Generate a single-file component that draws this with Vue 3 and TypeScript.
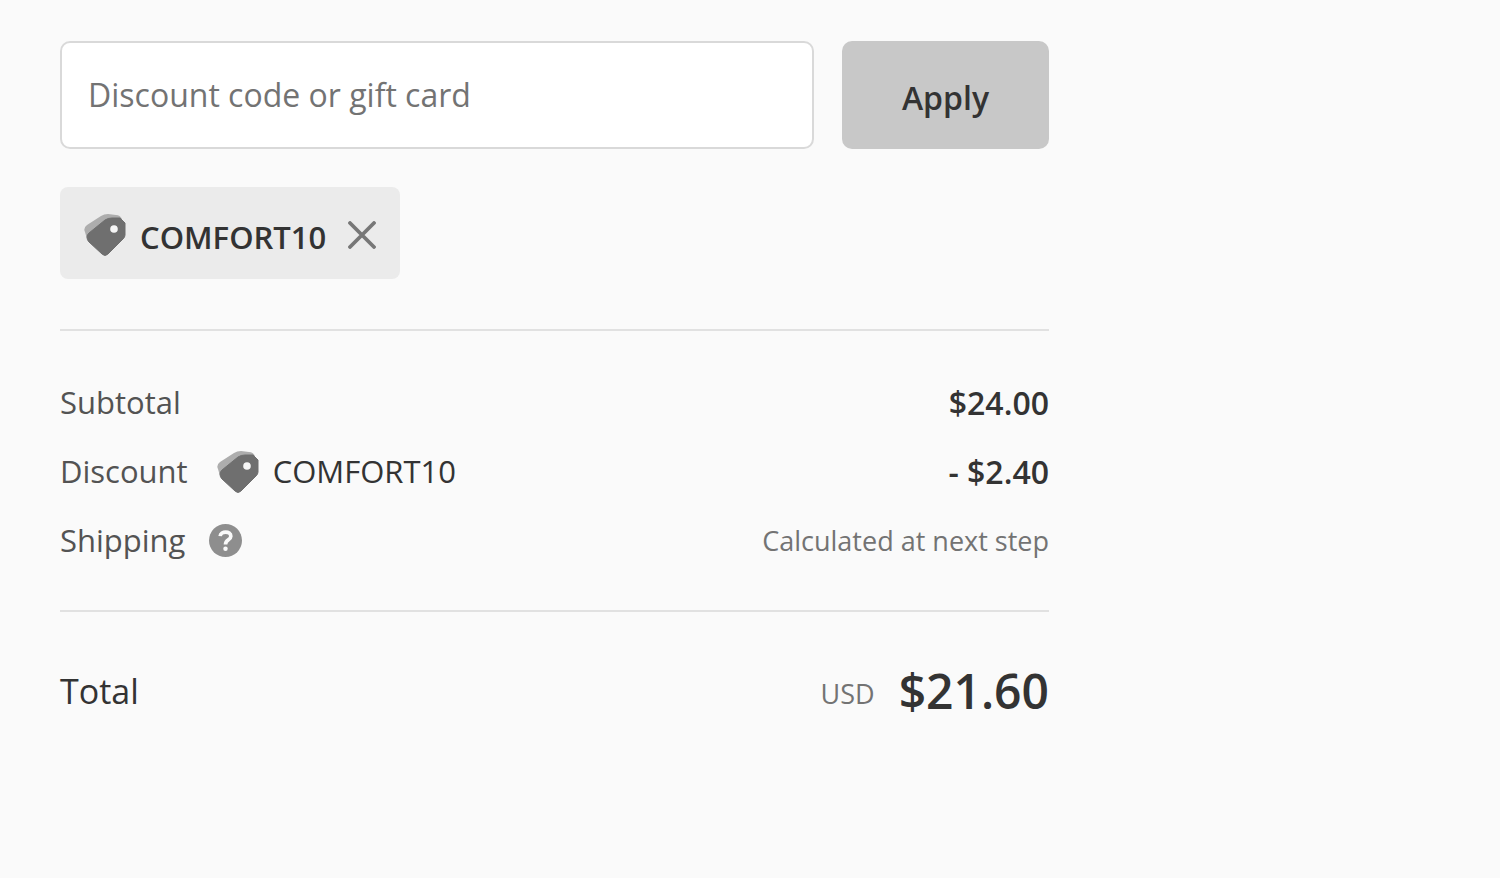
<script setup lang="ts">
import { ref } from 'vue'

const code = ref('')
const applied = ref<string[]>(['COMFORT10'])

function apply() {
  const value = code.value.trim()
  if (value && !applied.value.includes(value)) applied.value.push(value)
  code.value = ''
}

function remove(name: string) {
  applied.value = applied.value.filter((item) => item !== name)
}
</script>

<template>
  <main class="summary">
    <svg class="sprite" aria-hidden="true">
      <symbol id="tag" viewBox="0 0 42 44">
        <path
          d="M1 19 Q-1 15 3 12 L17 3 Q20 1 24 1 L32 2 Q36 2 38 6 L38 14 L3 26 Z"
          fill="#adadad"
        />
        <path
          d="M28 5 L36 5 L41 10 L41 22 Q41 24 39 26 L24 41 Q21 44 18 41 L5 29 Q3 27 3 24 Q3 22 5 20 L21 7 Q24 5 28 5 Z"
          fill="#6f6f6f"
          stroke="#6f6f6f"
          stroke-linejoin="round"
        />
        <circle cx="30" cy="16" r="3.8" fill="#f6f6f6" />
      </symbol>
    </svg>

    <form class="redeem" @submit.prevent="apply">
      <input v-model="code" type="text" class="field" aria-label="Discount code or gift card" placeholder="Discount code or gift card" />
      <button type="submit" class="apply">Apply</button>
    </form>

    <ul class="chips">
      <li v-for="name in applied" :key="name" class="chip">
        <svg class="tag" aria-hidden="true"><use href="#tag" /></svg>
        <span class="chip-name">{{ name }}</span>
        <button type="button" class="remove" :aria-label="`Remove ${name}`" @click="remove(name)">
          <svg class="cross" viewBox="0 0 28 28" aria-hidden="true">
            <path d="M2 2 L26 26 M26 2 L2 26" fill="none" stroke="#777" stroke-width="3.8" stroke-linecap="round" />
          </svg>
        </button>
      </li>
    </ul>

    <dl class="lines">
      <div class="line">
        <dt>Subtotal</dt>
        <dd class="amount">$24.00</dd>
      </div>
      <div class="line">
        <dt>
          Discount
          <span class="code"><svg class="tag" aria-hidden="true"><use href="#tag" /></svg>COMFORT10</span>
        </dt>
        <dd class="amount">- $2.40</dd>
      </div>
      <div class="line">
        <dt>
          Shipping
          <button type="button" class="help" aria-label="Shipping help">
            <svg viewBox="0 0 34 34" aria-hidden="true">
              <circle cx="17" cy="17" r="17" fill="#8e8e8e" />
              <path d="M11.5 12.5 C12 7 22.5 7 22.5 12.5 C22.5 16.5 17 16 17 21" fill="none" stroke="#fafafa" stroke-width="3.8" />
              <circle cx="17" cy="25.5" r="2.3" fill="#fafafa" />
            </svg>
          </button>
        </dt>
        <dd class="note">Calculated at next step</dd>
      </div>
    </dl>

    <dl class="total">
      <dt>Total</dt>
      <dd>
        <span class="currency">USD</span>
        <span class="price">$21.60</span>
      </dd>
    </dl>
  </main>
</template>

<style>
body {
  margin: 0;
  background: #fafafa;
}
</style>

<style scoped>
.summary {
  box-sizing: border-box;
  max-width: 1109px;
  padding: 41px 60px;
  color: #333;
  font-family: 'Segoe UI', 'Open Sans', 'Noto Sans', sans-serif;
  font-size: 31px;
}

.sprite {
  display: none;
}

.redeem {
  display: flex;
  gap: 28px;
  font-size: 32px;
}

.field {
  box-sizing: border-box;
  flex: 1;
  min-width: 0;
  padding: 28px 26px;
  border: 2px solid #d9d9d9;
  border-radius: 10px;
  background: #fff;
  color: #333;
  font: inherit;
  line-height: 48px;
}

.field::placeholder {
  color: #737373;
  opacity: 1;
}

.apply {
  padding: 4px 60px 0;
  border: 0;
  border-radius: 10px;
  background: #c8c8c8;
  color: #333;
  font: inherit;
  font-weight: 600;
}

.chips {
  display: flex;
  flex-wrap: wrap;
  gap: 20px;
  margin: 38px 0 50px;
  padding: 0;
  list-style: none;
}

.chip {
  display: flex;
  align-items: center;
  padding: 22px 24px 18px;
  border-radius: 8px;
  background: #ebebeb;
  line-height: 48px;
}

.tag {
  flex: none;
  width: 42px;
  height: 44px;
  margin-right: 14px;
}

.chip-name {
  padding-top: 4px;
  font-weight: 600;
}

.remove {
  display: flex;
  margin-left: 22px;
  padding: 0;
  border: 0;
  background: none;
}

.cross {
  width: 28px;
  height: 28px;
}

.lines {
  margin: 0;
  padding: 37px 0 35px;
  border: solid #e1e1e1;
  border-width: 2px 0;
  line-height: 69px;
}

.line {
  display: flex;
  justify-content: space-between;
}

dt,
dd {
  display: flex;
  align-items: center;
  margin: 0;
}

.line dt {
  color: #535353;
}

.line .code {
  display: flex;
  align-items: center;
  margin-left: 29px;
  color: #333;
}

.amount {
  font-size: 32px;
  font-weight: 600;
}

.help {
  display: flex;
  margin-left: 24px;
  padding: 0;
  border: 0;
  background: none;
}

.help svg {
  width: 33px;
  height: 33px;
}

.line .note {
  color: #737373;
  font-size: 27px;
}

.total {
  display: flex;
  align-items: center;
  justify-content: space-between;
  margin: 0;
  padding-top: 52px;
}

.total dt {
  font-size: 34px;
}

.total dd {
  align-items: flex-end;
  gap: 24px;
}

.currency {
  color: #737373;
  font-size: 27px;
  line-height: 48px;
}

.price {
  font-size: 48px;
  font-weight: 600;
  line-height: 54px;
}
</style>
